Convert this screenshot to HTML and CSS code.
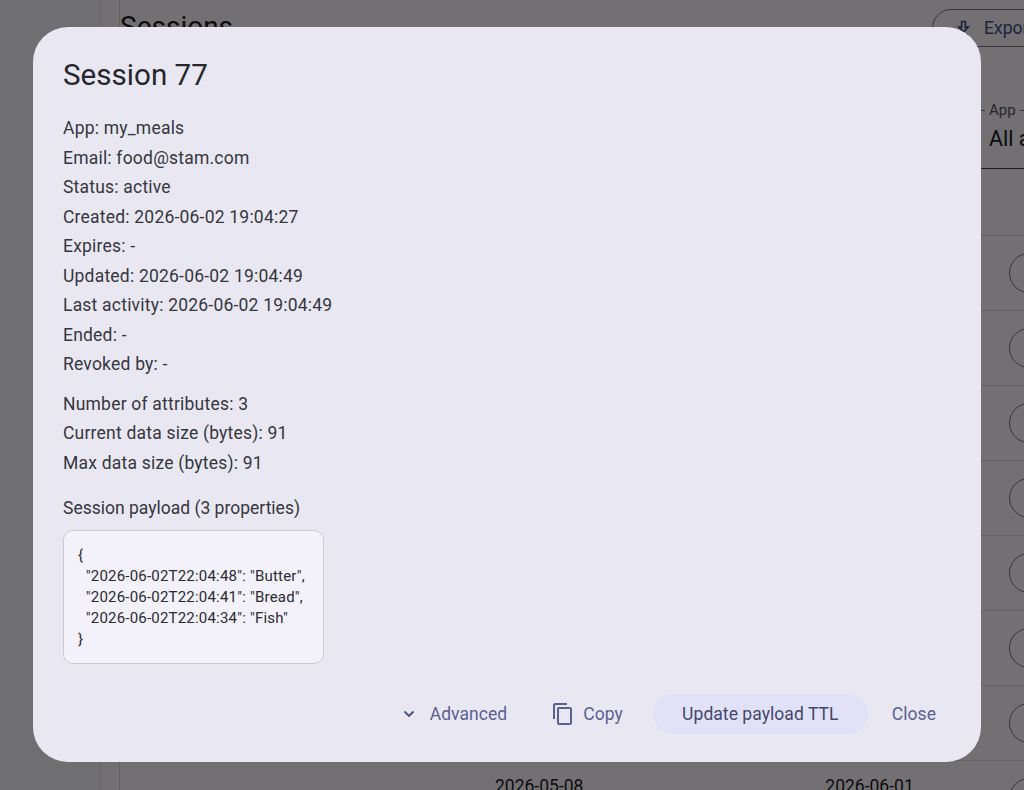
FILE: index.html
```html
<!DOCTYPE html>
<html lang="en">
<head>
  <meta charset="UTF-8" />
  <title>Sessions</title>
  <link rel="stylesheet" href="styles.css">
</head>
<body>

<!-- page behind the dialog -->
<div class="page">
  <div class="side-nav"></div>
  <div class="side-rail"></div>
  <main class="content">
    <div class="top-bar">
      <h1 class="page-title">Sessions</h1>
      <div class="export-btn">
        <svg class="export-icon" viewBox="0 0 14 16"><path d="M5 1h4v6h3L7 12.500 2 7h3z M2 15h10" fill="none" stroke="currentColor" stroke-width="1.800"/></svg>
        <span>Export</span>
      </div>
    </div>
    <div class="filter-row">
      <div class="app-filter">
        <div class="filter-label">App</div>
        <div class="filter-value">All apps</div>
      </div>
    </div>
    <div class="table">
      <div class="row"><span class="row-action"></span></div>
      <div class="row"><span class="row-action"></span></div>
      <div class="row"><span class="row-action"></span></div>
      <div class="row"><span class="row-action"></span></div>
      <div class="row"><span class="row-action"></span></div>
      <div class="row"><span class="row-action"></span></div>
      <div class="row"><span class="row-action"></span></div>
      <div class="row last-row">
        <span class="cell-created">2026-05-08</span>
        <span class="cell-expires">2026-06-01</span>
        <span class="row-action"></span>
      </div>
    </div>
  </main>
</div>

<div class="scrim"></div>

<!-- session details dialog -->
<div class="dialog">
  <h2 class="dialog-title">Session 77</h2>

  <div class="info-group">
    <div class="info-line">App: my_meals</div>
    <div class="info-line">Email: food@stam.com</div>
    <div class="info-line">Status: active</div>
    <div class="info-line">Created: 2026-06-02 19:04:27</div>
    <div class="info-line">Expires: -</div>
    <div class="info-line">Updated: 2026-06-02 19:04:49</div>
    <div class="info-line">Last activity: 2026-06-02 19:04:49</div>
    <div class="info-line">Ended: -</div>
    <div class="info-line">Revoked by: -</div>
  </div>

  <div class="info-group stats">
    <div class="info-line">Number of attributes: 3</div>
    <div class="info-line">Current data size (bytes): 91</div>
    <div class="info-line">Max data size (bytes): 91</div>
  </div>

  <div class="payload-title">Session payload (3 properties)</div>
  <pre class="payload">{
  "2026-06-02T22:04:48": "Butter",
  "2026-06-02T22:04:41": "Bread",
  "2026-06-02T22:04:34": "Fish"
}</pre>

  <div class="actions">
    <div class="btn btn-advanced">
      <svg class="chevron" viewBox="0 0 12 8"><path d="M1.500 1.500 6 6l4.500-4.500" fill="none" stroke="currentColor" stroke-width="1.800"/></svg>
      <span>Advanced</span>
    </div>
    <div class="btn btn-copy">
      <svg class="copy-icon" viewBox="0 0 24 24"><path d="M16 1H4c-1.100 0-2 .9-2 2v14h2V3h12V1zm3 4H8c-1.100 0-2 .9-2 2v14c0 1.100.9 2 2 2h11c1.100 0 2-.9 2-2V7c0-1.100-.9-2-2-2zm0 16H8V7h11v14z" fill="currentColor"/></svg>
      <span>Copy</span>
    </div>
    <div class="btn btn-update">Update payload TTL</div>
    <div class="btn btn-close">Close</div>
  </div>
</div>

</body>
</html>
```

FILE: styles.css
```css
body {
  margin: 0;
  height: 790px;
  overflow: hidden;
  font-family: Roboto, sans-serif;
  background: #fcf9ff;
  color: #1b1b21;
}

.page {
  display: flex;
  height: 790px;
  overflow: hidden;
}

.side-nav {
  width: 100px;
  flex-shrink: 0;
  background: #f7f4fb;
  border-right: 1px solid #e4e1e9;
}

.side-rail {
  width: 18px;
  flex-shrink: 0;
  border-right: 1px solid #d8d5de;
}

.content {
  flex: 1;
  min-width: 0;
}

.top-bar {
  display: flex;
  justify-content: space-between;
  height: 56px;
  padding-top: 9px;
  box-sizing: border-box;
}

.page-title {
  margin: 0;
  font-size: 28px;
  font-weight: 400;
  line-height: 36px;
}

.export-btn {
  display: flex;
  align-items: center;
  flex-shrink: 0;
  gap: 14px;
  width: 140px;
  height: 38px;
  margin-right: -48px;
  padding-left: 24px;
  box-sizing: border-box;
  border: 1px solid #767680;
  border-radius: 19px 0 0 19px;
  color: #454d85;
  font-size: 17.500px;
}

.export-icon {
  width: 13px;
  height: 16px;
}

.filter-row {
  display: flex;
  justify-content: flex-end;
  height: 111px;
  padding-top: 45px;
  box-sizing: border-box;
}

.app-filter {
  width: 43px;
  height: 67px;
  overflow: hidden;
  white-space: nowrap;
  border-bottom: 1px solid #46464f;
}

.filter-label {
  display: flex;
  align-items: center;
  gap: 4px;
  font-size: 15px;
  line-height: 18px;
  color: #55555e;
}

.filter-label::before,
.filter-label::after {
  content: "";
  height: 1px;
  background: #767680;
}

.filter-label::before {
  width: 4px;
}

.filter-label::after {
  flex: 1;
}

.filter-value {
  padding-left: 8px;
  margin-top: 6px;
  font-size: 21.500px;
  line-height: 28px;
}

.table {
  margin-top: 68px;
  border-top: 1px solid #d8d5de;
}

.row {
  display: flex;
  align-items: center;
  justify-content: flex-end;
  height: 74px;
  border-bottom: 1px solid #d8d5de;
}

.row-action {
  width: 38px;
  height: 38px;
  margin-right: -25px;
  border: 1px solid #767680;
  border-radius: 50%;
  flex-shrink: 0;
}

.last-row {
  justify-content: flex-start;
  align-items: flex-start;
}

.cell-created {
  margin: 15px 0 0 375px;
  font-size: 17.500px;
}

.cell-expires {
  margin: 15px 0 0 242px;
  font-size: 17.500px;
}

.last-row .row-action {
  margin: 17px -25px 0 auto;
}

.scrim {
  position: fixed;
  inset: 0;
  background: rgba(0, 0, 0, 0.55);
}

.dialog {
  position: fixed;
  left: 33px;
  top: 27px;
  width: 948px;
  height: 735px;
  padding: 30px 30px 0;
  box-sizing: border-box;
  background: #e9e8f2;
  border-radius: 35px;
}

.dialog-title {
  margin: 0 0 20px;
  font-size: 29.600px;
  font-weight: 400;
  line-height: 37px;
  color: #26262d;
}

.info-group {
  margin-bottom: 10px;
}

.info-line {
  font-size: 17.500px;
  line-height: 29.550px;
  letter-spacing: 0.21px;
  color: #36363e;
}

.stats {
  margin-bottom: 15px;
}

.payload-title {
  font-size: 17.500px;
  line-height: 29.500px;
  color: #36363e;
}

.payload {
  width: 261px;
  height: 134px;
  margin: 7px 0 0;
  padding: 14px 14px;
  box-sizing: border-box;
  background: #f3f1f9;
  border: 1.500px solid #cbc9d2;
  border-radius: 10px;
  font-family: Roboto, sans-serif;
  font-size: 15px;
  line-height: 21px;
  letter-spacing: 0.2px;
  color: #2b2b33;
}

.actions {
  display: flex;
  align-items: center;
  justify-content: flex-end;
  margin-top: 30px;
  padding-right: 15px;
  height: 40px;
}

.btn {
  display: flex;
  align-items: center;
  font-size: 17.500px;
  letter-spacing: 0.05px;
  color: #5a6094;
  white-space: nowrap;
}

.btn-advanced {
  gap: 15px;
  margin-right: 46px;
}

.chevron {
  width: 12px;
  height: 8px;
  color: #454d85;
}

.btn-copy {
  gap: 8px;
  margin-right: 30px;
}

.copy-icon {
  width: 24px;
  height: 24px;
  margin-left: -2px;
}

.btn-update {
  justify-content: center;
  width: 215px;
  height: 40px;
  border-radius: 20px;
  background: #e1e1f7;
  color: #43476e;
  margin-right: 24px;
}
```
